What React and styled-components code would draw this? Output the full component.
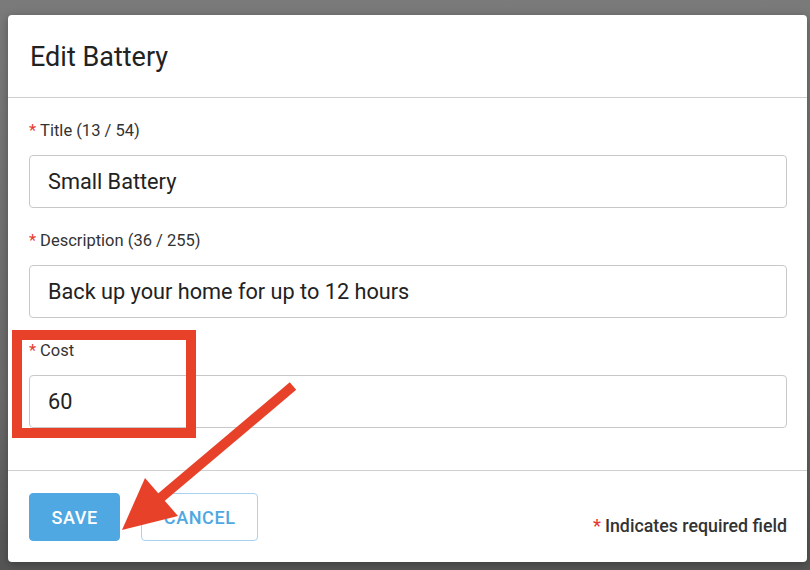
import React from 'react';
import styled, { createGlobalStyle } from 'styled-components';

const GlobalStyle = createGlobalStyle`
  html, body {
    margin: 0;
    padding: 0;
    background: #777;
    font-family: Roboto, 'Liberation Sans', sans-serif;
  }
`;

const Page = styled.div`
  position: relative;
  width: 810px;
  height: 570px;
  padding: 15px 3px 0 8px;
  box-sizing: border-box;
  background: linear-gradient(180deg, #7a7a7a 0%, #6a6a6a 70%, #555 100%);
  overflow: hidden;
`;

const Modal = styled.div`
  width: 799px;
  height: 547px;
  background: #fff;
  border-radius: 4px;
  display: flex;
  flex-direction: column;
  box-shadow: 0 2px 10px rgba(0, 0, 0, 0.3);
`;

const Header = styled.div`
  height: 82px;
  padding: 0 22px;
  display: flex;
  align-items: center;
  border-bottom: 1px solid #cfcfcf;
`;

const Title = styled.h1`
  margin: 0;
  padding-top: 2px;
  font-size: 27px;
  font-weight: 400;
  color: #222;
`;

const Body = styled.div`
  padding: 23px 20px 42px 21px;
  border-bottom: 1px solid #cfcfcf;
`;

const Field = styled.div`
  display: flex;
  flex-direction: column;
  margin-bottom: ${(p) => (p.last ? '0' : '23px')};
`;

const Label = styled.label`
  height: 20px;
  line-height: 20px;
  font-size: 16.5px;
  color: #333;
  margin-bottom: 14px;
`;

const Star = styled.span`
  color: #e53a2f;
  margin-right: 4px;
`;

const Input = styled.input`
  height: 53px;
  box-sizing: border-box;
  border: 1px solid #c8c8c8;
  border-radius: 4px;
  padding: 0 18px;
  font-family: inherit;
  font-size: 21.7px;
  color: #222;
  outline: none;
`;

const Footer = styled.div`
  flex: 1;
  padding: 22px 20px 0 21px;
  display: flex;
  align-items: flex-start;
  gap: 21px;
`;

const Button = styled.button`
  height: 48px;
  padding: 0 21.5px;
  border-radius: 4px;
  font-family: inherit;
  font-size: 18px;
  font-weight: 500;
  letter-spacing: 0.6px;
  cursor: pointer;
  border: 1px solid ${(p) => (p.primary ? '#4fa8e2' : '#a8d3f0')};
  background: ${(p) => (p.primary ? '#4fa8e2' : '#fff')};
  color: ${(p) => (p.primary ? '#fff' : '#4fa8e2')};
`;

const Required = styled.div`
  margin-left: auto;
  margin-top: 23px;
  line-height: 20px;
  font-size: 17.8px;
  font-weight: 500;
  color: #333;
`;

const Highlight = styled.div`
  position: absolute;
  left: 12px;
  top: 330px;
  width: 184px;
  height: 108px;
  box-sizing: border-box;
  border: 10px solid #e8412a;
  pointer-events: none;
`;

const Arrow = styled.svg`
  position: absolute;
  left: 0;
  top: 0;
  pointer-events: none;
`;

export default function App() {
  return (
    <>
      <GlobalStyle />
      <Page>
        <Modal>
          <Header>
            <Title>Edit Battery</Title>
          </Header>
          <Body>
            <Field>
              <Label><Star>*</Star>Title (13 / 54)</Label>
              <Input defaultValue="Small Battery" />
            </Field>
            <Field>
              <Label><Star>*</Star>Description (36 / 255)</Label>
              <Input defaultValue="Back up your home for up to 12 hours" />
            </Field>
            <Field last>
              <Label><Star>*</Star>Cost</Label>
              <Input defaultValue="60" />
            </Field>
          </Body>
          <Footer>
            <Button primary>SAVE</Button>
            <Button>CANCEL</Button>
            <Required><Star>*</Star>Indicates required field</Required>
          </Footer>
        </Modal>
        <Highlight />
        <Arrow width="810" height="570" viewBox="0 0 810 570">
          <line x1="293" y1="386" x2="158" y2="500" stroke="#e8412a" strokeWidth="10" />
          <polygon points="122,530 145,478 178,516" fill="#e8412a" />
        </Arrow>
      </Page>
    </>
  );
}
